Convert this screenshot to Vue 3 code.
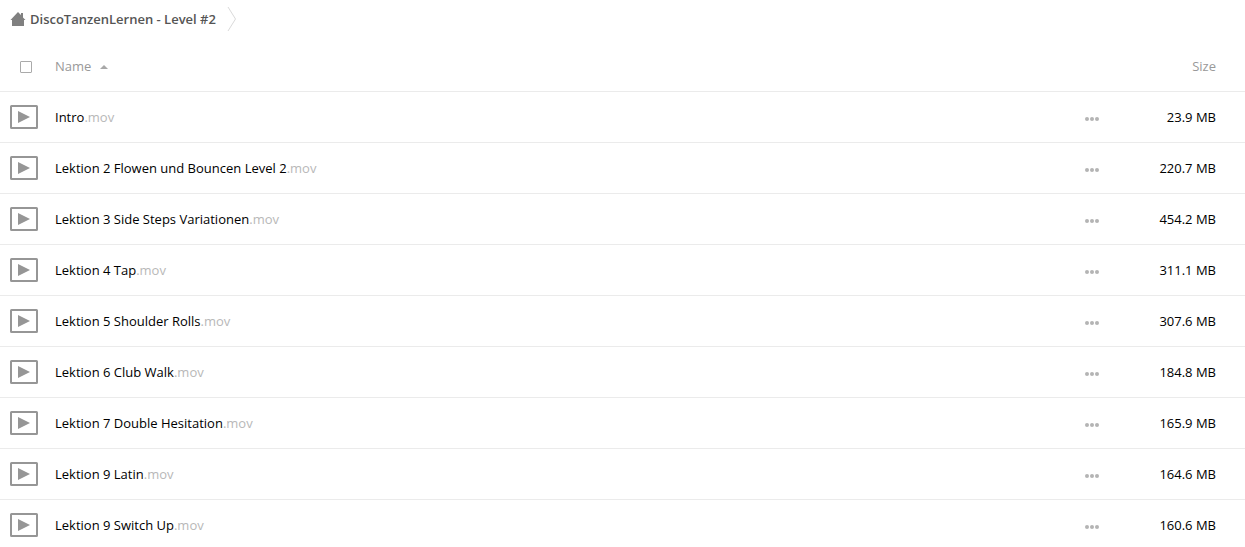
<script setup>
import { ref, computed } from 'vue'

const files = [
  { name: 'Intro', ext: '.mov', size: '23.9 MB' },
  { name: 'Lektion 2 Flowen und Bouncen Level 2', ext: '.mov', size: '220.7 MB' },
  { name: 'Lektion 3 Side Steps Variationen', ext: '.mov', size: '454.2 MB' },
  { name: 'Lektion 4 Tap', ext: '.mov', size: '311.1 MB' },
  { name: 'Lektion 5 Shoulder Rolls', ext: '.mov', size: '307.6 MB' },
  { name: 'Lektion 6 Club Walk', ext: '.mov', size: '184.8 MB' },
  { name: 'Lektion 7 Double Hesitation', ext: '.mov', size: '165.9 MB' },
  { name: 'Lektion 9 Latin', ext: '.mov', size: '164.6 MB' },
  { name: 'Lektion 9 Switch Up', ext: '.mov', size: '160.6 MB' },
]

const allSelected = ref(false)
const ascending = ref(true)
const rows = computed(() => (ascending.value ? files : [...files].reverse()))
</script>

<template>
  <main class="files">
    <nav class="crumbs" aria-label="Breadcrumb">
      <a class="crumb" href="#">
        <svg class="home" width="16" height="14" viewBox="0 0 16 14" aria-hidden="true">
          <path d="M8 0L0.500 8H2v6h12V8h1.500L13 5.500V1h-2v2z" fill="#808080" />
        </svg>
        <span>DiscoTanzenLernen - Level #2</span>
      </a>
      <svg class="chevron" width="10" height="26" viewBox="0 0 10 26" aria-hidden="true">
        <path d="M1 1l7.500 12L1 25" fill="none" stroke="#dadada" />
      </svg>
    </nav>

    <table class="list">
      <thead>
        <tr>
          <th class="icon-col">
            <input v-model="allSelected" class="check" type="checkbox" aria-label="Select all" />
          </th>
          <th class="name-col">
            <button class="sort" type="button" @click="ascending = !ascending">
              Name
              <svg class="arrow" width="8" height="4" viewBox="0 0 8 4" aria-hidden="true">
                <path d="M0 4l4-4 4 4z" fill="#a8a8a8" />
              </svg>
            </button>
          </th>
          <th class="menu-col"></th>
          <th class="size-col">Size</th>
        </tr>
      </thead>
      <tbody>
        <tr v-for="file in rows" :key="file.name">
          <td class="icon-col">
            <svg class="video" width="28" height="24" viewBox="0 0 28 24" aria-hidden="true">
              <rect x="1" y="1" width="26" height="22" rx="0.500" fill="none" stroke="#969696" stroke-width="2" />
              <path d="M8 6l12 6-12 6z" fill="#969696" />
            </svg>
          </td>
          <td class="name-col">
            <a class="file" href="#">{{ file.name }}<span class="ext">{{ file.ext }}</span></a>
          </td>
          <td class="menu-col">
            <button class="more" type="button" :aria-label="'Actions for ' + file.name">
              <svg width="14" height="4" viewBox="0 0 14 4" aria-hidden="true">
                <circle cx="2" cy="2" r="2" />
                <circle cx="7" cy="2" r="2" />
                <circle cx="12" cy="2" r="2" />
              </svg>
            </button>
          </td>
          <td class="size-col">{{ file.size }}</td>
        </tr>
      </tbody>
    </table>
  </main>
</template>

<style>
html {
  scrollbar-width: none;
}
body {
  margin: 0;
  background: #fff;
}
</style>

<style scoped>
.files {
  font: 13px/20px "Open Sans", "Noto Sans", sans-serif;
  color: #000;
}
a {
  color: inherit;
  text-decoration: none;
}
svg {
  display: block;
  flex: none;
}
.crumbs {
  display: flex;
  align-items: center;
  gap: 11px;
  height: 38px;
  margin-bottom: 3px;
  padding-left: 10px;
}
.crumb {
  display: flex;
  align-items: center;
  gap: 4px;
  font-weight: 600;
  color: #555;
}
.list {
  width: 100%;
  table-layout: fixed;
  border-collapse: separate;
  border-spacing: 0;
}
th,
td {
  box-sizing: border-box;
  height: 51px;
  padding: 0;
  border-bottom: 1px solid #ebebeb;
  font-weight: 400;
  text-align: left;
  vertical-align: middle;
}
th {
  color: #999;
}
.icon-col {
  width: 55px;
  padding-left: 10px;
}
th.icon-col {
  padding-top: 2px;
  padding-left: 20px;
}
.menu-col {
  width: 45px;
}
.size-col {
  width: 130px;
  padding-right: 29px;
  text-align: right;
}
.check {
  display: block;
  appearance: none;
  box-sizing: border-box;
  width: 12px;
  height: 12px;
  margin: 0;
  border: 1px solid #aaa;
  border-radius: 1px;
}
.check:checked {
  background: #969696;
}
button {
  padding: 0;
  border: 0;
  background: none;
  font: inherit;
  color: inherit;
  cursor: pointer;
}
.sort {
  display: flex;
  align-items: center;
  gap: 9px;
}
.arrow {
  padding-top: 2px;
}
.more {
  display: block;
  padding: 12px 15px 8px;
}
.more svg {
  fill: #b4b4b4;
}
.ext {
  color: #b8b8b8;
}
</style>
